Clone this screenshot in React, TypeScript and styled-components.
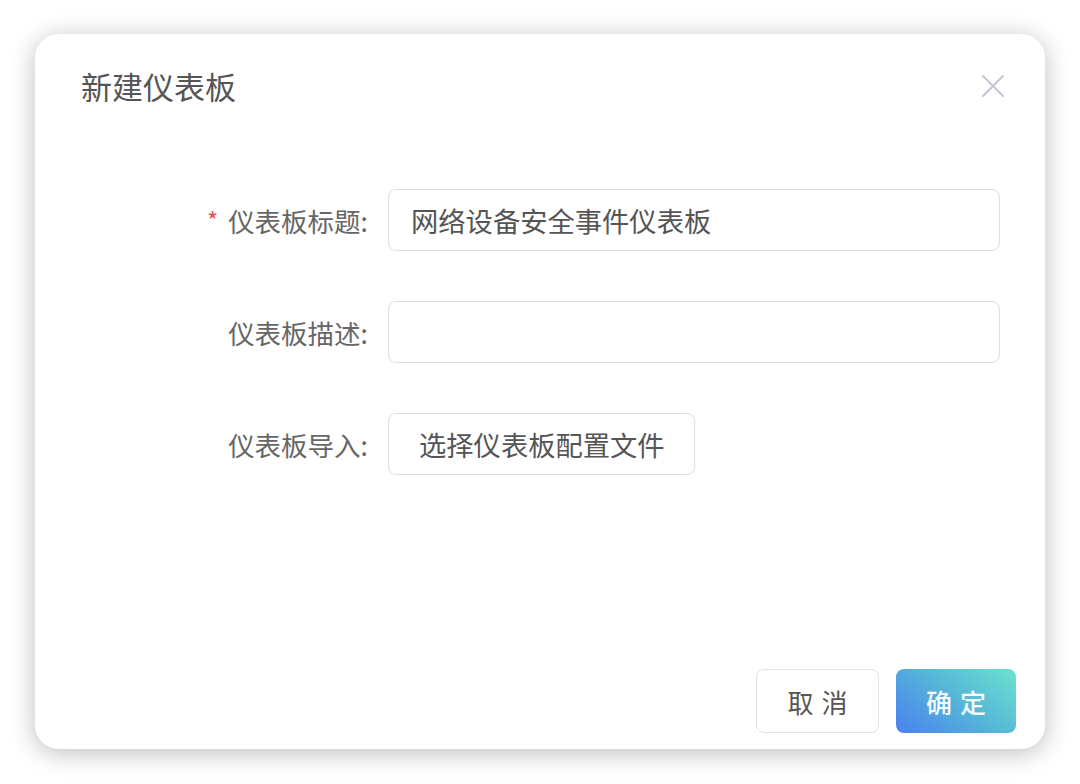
import React from "react";
import styled, { createGlobalStyle } from "styled-components";

const GlobalStyle = createGlobalStyle`
    html, body {
        margin: 0;
        padding: 0;
        background: #ffffff;
        font-family: "Noto Sans CJK SC", "Noto Sans", sans-serif;
    }
`;

const Page = styled.div`
    width: 1080px;
    height: 784px;
    padding: 34px 35px 35px 35px;
    box-sizing: border-box;
`;

const Dialog = styled.div`
    width: 1010px;
    height: 715px;
    background: #fff;
    border-radius: 24px;
    box-shadow: 0 4px 26px rgba(0, 0, 0, 0.26);
    display: flex;
    flex-direction: column;
    box-sizing: border-box;
`;

const Header = styled.div`
    display: flex;
    align-items: center;
    justify-content: space-between;
    padding: 32px 40px 0 46px;
    height: 72px;
    box-sizing: border-box;
`;

const Title = styled.h2`
    margin: 0;
    font-size: 31px;
    font-weight: 400;
    line-height: 36px;
    color: #555;
`;

const CloseButton = styled.button`
    border: none;
    background: none;
    padding: 0;
    width: 24px;
    height: 24px;
    display: flex;
    align-items: center;
    justify-content: center;
    cursor: pointer;
`;

const Form = styled.div`
    display: grid;
    grid-template-columns: 333px 1fr;
    column-gap: 20px;
    row-gap: 50px;
    padding: 83px 45px 0 0;
    align-items: center;
`;

const Label = styled.label<{ required?: boolean }>`
    justify-self: end;
    font-size: 26.5px;
    color: #666;
    display: flex;
    align-items: center;
    gap: 10px;
    &::before {
        content: ${p => (p.required ? '"*"' : "none")};
        color: #f04a4a;
        font-size: 24px;
        margin-top: -2px;
    }
`;

const Input = styled.input`
    height: 62px;
    box-sizing: border-box;
    border: 1.5px solid #dedede;
    border-radius: 8px;
    padding: 0 22px;
    font-family: inherit;
    font-size: 27.3px;
    color: #555;
    outline: none;
    width: 100%;
`;

const FileButton = styled.button`
    justify-self: start;
    height: 62px;
    padding: 0 29px 0 30px;
    border: 1.5px solid #dedede;
    border-radius: 8px;
    background: #fff;
    font-family: inherit;
    font-size: 27.3px;
    color: #555;
`;

const Footer = styled.div`
    margin-top: auto;
    display: flex;
    justify-content: flex-end;
    gap: 17px;
    padding: 0 29px 16px 0;
`;

const Button = styled.button<{ primary?: boolean }>`
    width: ${p => (p.primary ? "120px" : "123px")};
    height: 64px;
    border-radius: 8px;
    font-family: inherit;
    font-size: 26px;
    letter-spacing: 8px;
    text-indent: 8px;
    border: ${p => (p.primary ? "none" : "1.5px solid #e2e2e2")};
    background: ${p => (p.primary ? "linear-gradient(40deg, #4a80f0 0%, #55b4d8 50%, #6be2cf 100%)" : "#fff")};
    color: ${p => (p.primary ? "#f4fbff" : "#555")};
    font-weight: ${p => (p.primary ? 500 : 400)};
`;

const CloseIcon = () => (
    <svg width="24" height="24" viewBox="0 0 24 24">
        <path d="M2 2 L22 22 M22 2 L2 22" stroke="#c6c4d4" strokeWidth="2" strokeLinecap="round" />
    </svg>
);

export default function App() {
    return <>
        <GlobalStyle />
        <Page>
            <Dialog>
                <Header>
                    <Title>新建仪表板</Title>
                    <CloseButton><CloseIcon /></CloseButton>
                </Header>
                <Form>
                    <Label required>仪表板标题:</Label>
                    <Input defaultValue="网络设备安全事件仪表板" />
                    <Label>仪表板描述:</Label>
                    <Input />
                    <Label>仪表板导入:</Label>
                    <FileButton>选择仪表板配置文件</FileButton>
                </Form>
                <Footer>
                    <Button>取消</Button>
                    <Button primary>确定</Button>
                </Footer>
            </Dialog>
        </Page>
    </>;
}
